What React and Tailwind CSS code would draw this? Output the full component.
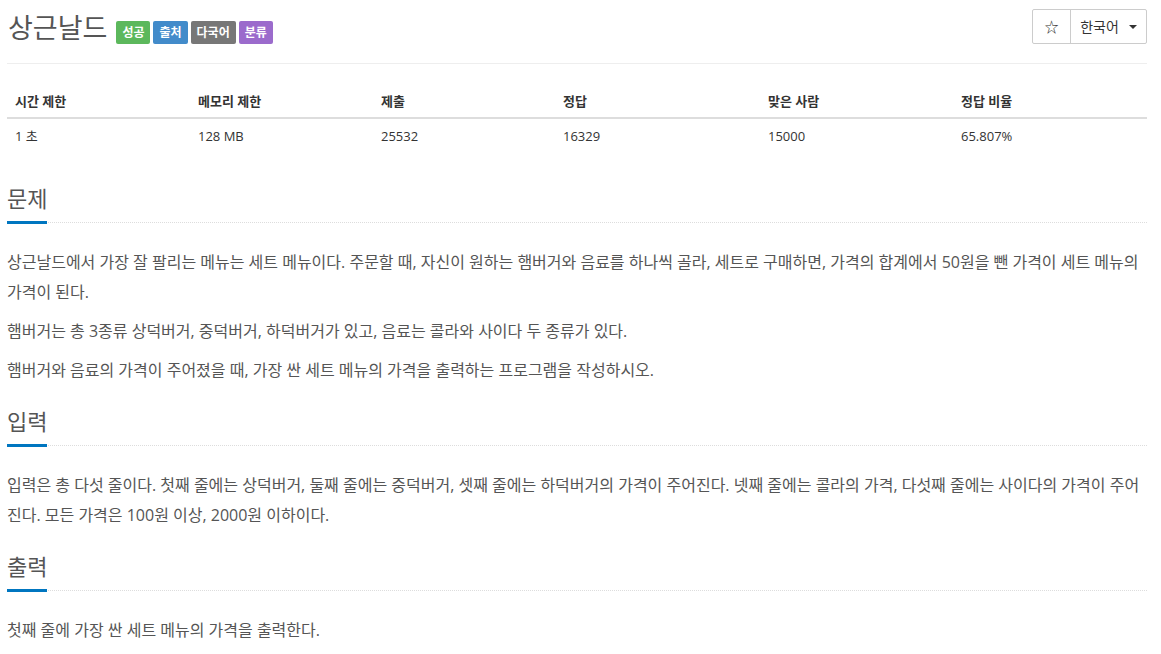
import React from "react";

const badges = [
  { label: "성공", cls: "bg-[#5cb85c]" },
  { label: "출처", cls: "bg-[#428bca]" },
  { label: "다국어", cls: "bg-[#777777]" },
  { label: "분류", cls: "bg-[#9b6bcc]" },
];

const stats = [
  { head: "시간 제한", value: "1 초", w: "w-[183px]" },
  { head: "메모리 제한", value: "128 MB", w: "w-[183px]" },
  { head: "제출", value: "25532", w: "w-[182px]" },
  { head: "정답", value: "16329", w: "w-[205px]" },
  { head: "맞은 사람", value: "15000", w: "w-[193px]" },
  { head: "정답 비율", value: "65.807%", w: "flex-1" },
];

const Section = ({ title, first, children }) => (
  <section className={first ? "mt-[26px]" : "mt-[17px]"}>
    <div className="relative border-b border-dotted border-[#dddddd]">
      <h2 className="inline-block text-[22px] leading-[38px] text-[#555555] border-b-[3px] border-[#0076c0] pb-[4px] -mb-[2px]">
        {title}
      </h2>
    </div>
    <div className="mt-[24px] text-[16px] leading-[30px] text-[#555555]">{children}</div>
  </section>
);

export default function App() {
  return (
    <div
      className="bg-white min-h-screen px-[7px] pr-[14px]"
      style={{ fontFamily: '"Open Sans", "Noto Sans CJK KR", sans-serif' }}
    >
      <div className="flex items-start justify-between pt-[9px] pb-[17px] border-b border-[#eeeeee]">
        <div className="flex items-end gap-[9px] pt-[1px]">
          <h1 className="text-[27px] leading-[36px] text-[#555555] ml-[1px]">상근날드</h1>
          <div className="flex gap-[3px] mb-[2px]">
            {badges.map((b) => (
              <span
                key={b.label}
                className={`${b.cls} text-white text-[12px] font-bold leading-[23px] px-[6px] rounded-[2px]`}
              >
                {b.label}
              </span>
            ))}
          </div>
        </div>
        <div className="flex border border-[#cccccc] rounded-[2px] h-[35px] text-[14px] text-[#333333]">
          <button className="w-[38px] flex items-center justify-center border-r border-[#cccccc]">☆</button>
          <button className="w-[75px] flex items-center justify-center gap-[10px]">
            한국어
            <span className="w-0 h-0 border-l-[4px] border-r-[4px] border-t-[4px] border-l-transparent border-r-transparent border-t-[#333333]" />
          </button>
        </div>
      </div>

      <div className="mt-[19px] text-[13px] text-[#333333]">
        <div className="flex border-b-2 border-[#dddddd]">
          {stats.map((s) => (
            <div key={s.head} className={`${s.w} px-[8px] pt-[9px] pb-[7px] font-bold leading-[18px]`}>
              {s.head}
            </div>
          ))}
        </div>
        <div className="flex">
          {stats.map((s) => (
            <div key={s.head} className={`${s.w} px-[8px] py-[8px] leading-[18px]`}>
              {s.value}
            </div>
          ))}
        </div>
      </div>

      <Section title="문제" first>
        <p>
          상근날드에서 가장 잘 팔리는 메뉴는 세트 메뉴이다. 주문할 때, 자신이 원하는 햄버거와 음료를 하나씩 골라, 세트로 구매하면, 가격의 합계에서 50원을 뺀 가격이 세트 메뉴의 가격이 된다.
        </p>
        <p className="mt-[9px]">햄버거는 총 3종류 상덕버거, 중덕버거, 하덕버거가 있고, 음료는 콜라와 사이다 두 종류가 있다.</p>
        <p className="mt-[9px]">햄버거와 음료의 가격이 주어졌을 때, 가장 싼 세트 메뉴의 가격을 출력하는 프로그램을 작성하시오.</p>
      </Section>

      <Section title="입력">
        <p>
          입력은 총 다섯 줄이다. 첫째 줄에는 상덕버거, 둘째 줄에는 중덕버거, 셋째 줄에는 하덕버거의 가격이 주어진다. 넷째 줄에는 콜라의 가격, 다섯째 줄에는 사이다의 가격이 주어진다. 모든 가격은 100원 이상, 2000원 이하이다.
        </p>
      </Section>

      <Section title="출력">
        <p>첫째 줄에 가장 싼 세트 메뉴의 가격을 출력한다.</p>
      </Section>
    </div>
  );
}
